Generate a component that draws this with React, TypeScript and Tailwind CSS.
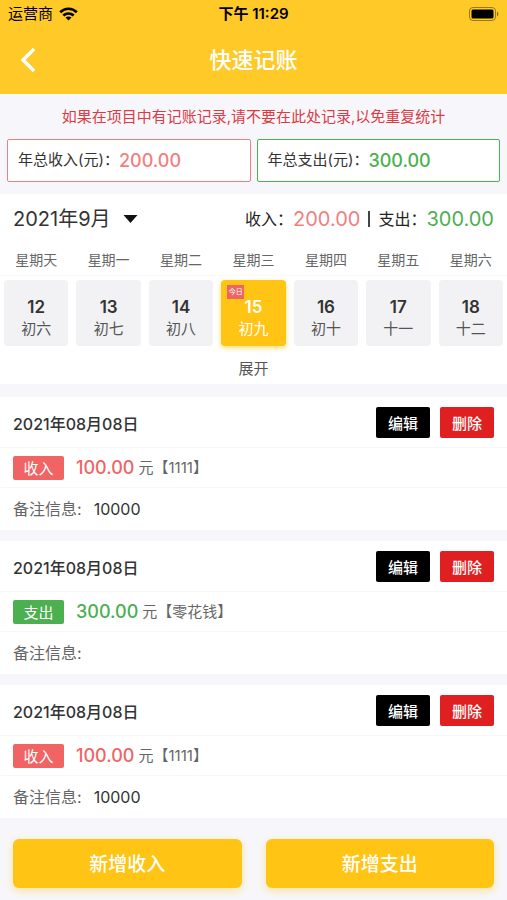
import { useState } from 'react';

const WEEKDAYS = ['星期天', '星期一', '星期二', '星期三', '星期四', '星期五', '星期六'];

const DAYS = [
  { day: 12, lunar: '初六' },
  { day: 13, lunar: '初七' },
  { day: 14, lunar: '初八' },
  { day: 15, lunar: '初九', today: true },
  { day: 16, lunar: '初十' },
  { day: 17, lunar: '十一' },
  { day: 18, lunar: '十二' },
];

const RECORDS = [
  { id: 1, date: '2021年08月08日', type: 'income', amount: '100.00', title: '1111', remark: '10000' },
  { id: 2, date: '2021年08月08日', type: 'expense', amount: '300.00', title: '零花钱', remark: '' },
  { id: 3, date: '2021年08月08日', type: 'income', amount: '100.00', title: '1111', remark: '10000' },
];

const StatusBar = () => (
  <div className="grid grid-cols-3 items-center h-7 px-2 text-[15px] text-black">
    <div className="flex items-center gap-1.5">
      <span>运营商</span>
      <svg width="19" height="14" viewBox="0 0 19 14" fill="none" stroke="#000" strokeWidth="2.7">
        <path d="M1.2 5.2C6 .6 13 .6 17.8 5.2" />
        <path d="M4.3 8.6c3-2.8 7.4-2.8 10.4 0" />
        <path d="M9.5 13.6 6.5 10.6c1.7-1.5 4.3-1.5 6 0z" fill="#000" stroke="none" />
      </svg>
    </div>
    <span className="text-center font-semibold">下午 11:29</span>
    <svg className="justify-self-end" width="30" height="14" viewBox="0 0 30 14">
      <rect x="0.5" y="0.5" width="26" height="13" rx="3.5" fill="none" stroke="#000" strokeOpacity="0.4" />
      <rect x="2.5" y="2.5" width="22" height="9" rx="1.5" fill="#000" />
      <path d="M28 4.5c1.8.7 1.8 4.3 0 5z" fill="#000" fillOpacity="0.5" />
    </svg>
  </div>
);

const Header = () => (
  <header className="bg-[#ffc928] h-[94px]">
    <StatusBar />
    <div className="grid grid-cols-3 items-center h-[64px] px-4">
      <button aria-label="返回" className="w-6 h-8 flex items-center justify-center">
        <svg width="16" height="26" viewBox="0 0 16 26" fill="none" stroke="#fff" strokeWidth="3.5">
          <path d="M14 2 3 13l11 11" />
        </svg>
      </button>
      <h1 className="text-center text-[22px] font-medium text-white">快速记账</h1>
    </div>
  </header>
);

const YearTotals = () => (
  <section className="px-[7px] pb-3">
    <p className="h-[45px] pt-0.5 flex items-center justify-center text-[15px] text-[#dc3a45] whitespace-nowrap">
      如果在项目中有记账记录,请不要在此处记录,以免重复统计
    </p>
    <div className="grid grid-cols-2 gap-1.5">
      <div className="h-[43px] flex items-center px-2.5 bg-white border border-[#f08080] rounded-xs">
        <span className="text-[15px] text-[#333]">年总收入(元)：</span>
        <span className="text-lg font-medium text-[#f08080]">200.00</span>
      </div>
      <div className="h-[43px] flex items-center px-2.5 bg-white border border-[#4caf50] rounded-xs">
        <span className="text-[15px] text-[#333]">年总支出(元)：</span>
        <span className="text-lg font-medium text-[#4caf50]">300.00</span>
      </div>
    </div>
  </section>
);

const Calendar = () => {
  const [selected, setSelected] = useState(15);

  return (
    <section className="bg-white">
      <div className="flex items-center justify-between h-[50px] px-[13px]">
        <button className="flex items-center gap-3 text-xl text-[#333]">
          2021年9月
          <svg width="15" height="8" viewBox="0 0 15 8">
            <path d="M.5 0h14L7.500 8z" fill="#111" />
          </svg>
        </button>
        <div className="flex items-center text-base text-[#222]">
          <span>收入：</span>
          <span className="text-xl text-[#f08080]">200.00</span>
          <span className="mx-2 w-0.5 h-4 bg-[#444]"></span>
          <span>支出：</span>
          <span className="text-xl text-[#4caf50]">300.00</span>
        </div>
      </div>

      <div className="grid grid-cols-7 h-8 items-center text-center text-sm text-[#666] border-b border-[#f8f8f8]">
        {WEEKDAYS.map((name) => (
          <span key={name}>{name}</span>
        ))}
      </div>

      <div className="grid grid-cols-7 pt-1">
        {DAYS.map(({ day, lunar, today }) => (
          <div key={day} className="px-1">
            <button
              onClick={() => setSelected(day)}
              className={
                selected === day
                  ? 'relative w-full h-[66px] pt-2.5 flex flex-col items-center justify-center rounded-sm bg-[#ffc414] text-white shadow-[0_2px_5px_#ffc41499]'
                  : 'relative w-full h-[66px] pt-2.5 flex flex-col items-center justify-center rounded-sm bg-[#f2f2f4] text-[#555]'
              }
            >
              {today && (
                <span className="absolute left-1.5 top-[5px] w-[17px] h-[14px] bg-[#f06464] text-[7px] leading-[14px] text-white text-center">
                  今日
                </span>
              )}
              <span className={selected === day ? 'text-[17px] leading-[21px] font-semibold' : 'text-[17px] leading-[21px] font-semibold text-[#333]'}>
                {day}
              </span>
              <span className="text-[15px] leading-[21px]">{lunar}</span>
            </button>
          </div>
        ))}
      </div>

      <button className="block w-full h-[38px] pt-2 text-[15px] text-[#555]">展开</button>
    </section>
  );
};

const RecordCard = ({ record }: { record: (typeof RECORDS)[number] }) => {
  const income = record.type === 'income';

  return (
    <article className="bg-white text-[15px]">
      <div className="flex items-center justify-between h-[51px] px-[13px] border-b border-[#f8f8f8]">
        <h2 className="pt-1 text-base font-medium text-[#333]">{record.date}</h2>
        <div className="flex gap-2.5 font-medium text-white">
          <button className="w-[54px] h-[31px] pt-1 rounded-xs bg-black">编辑</button>
          <button className="w-[54px] h-[31px] pt-1 rounded-xs bg-[#e01f20]">删除</button>
        </div>
      </div>
      <div className="flex items-center h-[40px] px-[13px] text-[#666] border-b border-[#f8f8f8]">
        <span
          className={
            income
              ? 'w-[51px] h-6 leading-[26px] text-center text-white rounded-xs bg-[#f06464]'
              : 'w-[51px] h-6 leading-[26px] text-center text-white rounded-xs bg-[#4caf50]'
          }
        >
          {income ? '收入' : '支出'}
        </span>
        <span className={income ? 'ml-3 mr-1 text-lg font-medium text-[#f06464]' : 'ml-3 mr-1 text-lg font-medium text-[#4caf50]'}>
          {record.amount}
        </span>
        <span className="pt-0.5">元【{record.title}】</span>
      </div>
      <div className="flex items-center h-[42px] px-[13px] gap-3">
        <span className="text-base text-[#666]">备注信息:</span>
        <span className="text-base text-[#333]">{record.remark}</span>
      </div>
    </article>
  );
};

export default function App() {
  return (
    <div className="min-h-screen bg-[#f7f7fb] font-['Inter','Noto_Sans_CJK_SC',sans-serif]">
      <Header />
      <YearTotals />
      <Calendar />
      <main className="flex flex-col gap-[11px] pt-[13px]">
        {RECORDS.map((record) => (
          <RecordCard key={record.id} record={record} />
        ))}
      </main>
      <footer className="grid grid-cols-2 gap-6 px-[13px] pt-[21px] pb-3 text-[19px] font-medium text-white">
        <button className="h-[49px] pt-1 rounded-md bg-[#ffc414] shadow-[0_3px_8px_#ffc41466]">新增收入</button>
        <button className="h-[49px] pt-1 rounded-md bg-[#ffc414] shadow-[0_3px_8px_#ffc41466]">新增支出</button>
      </footer>
    </div>
  );
}
